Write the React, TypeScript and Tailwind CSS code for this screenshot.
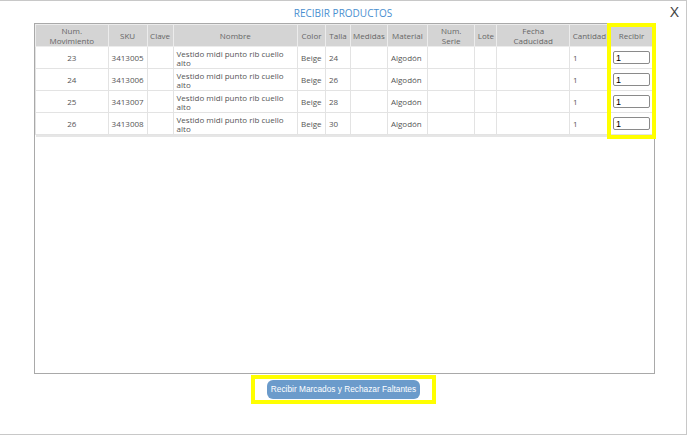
import { useState } from 'react'

type Item = { mov: number; sku: string; talla: string }

const items: Item[] = [
  { mov: 23, sku: '3413005', talla: '24' },
  { mov: 24, sku: '3413006', talla: '26' },
  { mov: 25, sku: '3413007', talla: '28' },
  { mov: 26, sku: '3413008', talla: '30' },
]

const headers: { label: React.ReactNode; w: string }[] = [
  { label: <>Num.<br />Movimiento</>, w: 'w-[73px]' },
  { label: 'SKU', w: 'w-[38px]' },
  { label: 'Clave', w: 'w-[26px]' },
  { label: 'Nombre', w: 'w-[126px]' },
  { label: 'Color', w: 'w-[28px]' },
  { label: 'Talla', w: 'w-[25px]' },
  { label: 'Medidas', w: 'w-[37px]' },
  { label: 'Material', w: 'w-[40px]' },
  { label: <>Num.<br />Serie</>, w: 'w-[48px]' },
  { label: 'Lote', w: 'w-[22px]' },
  { label: <>Fecha<br />Caducidad</>, w: 'w-[73px]' },
  { label: 'Cantidad', w: 'w-[40px]' },
  { label: 'Recibir', w: 'w-[42px]' },
]

const td = 'border border-[#e3e3e3] px-[3px] align-middle leading-[9px]'

export default function App() {
  const [qty, setQty] = useState<string[]>(items.map(() => '1'))

  return (
    <div className="w-[688px] h-[437px] bg-white overflow-hidden font-['Open_Sans',sans-serif] text-[#555]">
      <div className="relative h-[435px] w-[687px] border-t border-r border-b border-[#c8c8c8]">
        <button className="absolute right-[7px] top-[1px] text-[14px] font-['Liberation_Sans',sans-serif] text-[#444]">X</button>

        <h2 className="pt-[5px] h-[22px] text-center text-[10px] leading-[14px] text-[#4a8fd0]">RECIBIR PRODUCTOS</h2>

        <div className="ml-[34px] w-[621px] h-[351px] border border-[#a9a9a9] overflow-hidden">
          <table className="table-fixed border-collapse text-[8px]">
            <thead>
              <tr className="h-[22px] bg-[#d4d4d4]">
                {headers.map((h, i) => (
                  <th key={i} className={`${h.w} border border-[#ececec] font-normal text-center text-[#666] px-[2px] leading-[10px]`}>
                    {h.label}
                  </th>
                ))}
              </tr>
            </thead>
            <tbody>
              {items.map((it, i) => (
                <tr key={it.mov} className="h-[22px]">
                  <td className={`${td} text-center`}>{it.mov}</td>
                  <td className={td}>{it.sku}</td>
                  <td className={td}></td>
                  <td className={td}>Vestido midi punto rib cuello alto</td>
                  <td className={td}>Beige</td>
                  <td className={td}>{it.talla}</td>
                  <td className={td}></td>
                  <td className={td}>Algodón</td>
                  <td className={td}></td>
                  <td className={td}></td>
                  <td className={td}></td>
                  <td className={td}>1</td>
                  <td className={td}>
                    <input
                      value={qty[i]}
                      onChange={(e) => setQty(qty.map((q, j) => (j === i ? e.target.value : q)))}
                      className="w-[37px] h-[13px] border border-[#8a8a8a] rounded-[2px] px-[2px] text-[9px] font-medium text-black font-['Liberation_Sans',sans-serif] outline-none"
                    />
                  </td>
                </tr>
              ))}
              <tr className="h-[2px] bg-[#e6e6e6]">
                <td colSpan={13}></td>
              </tr>
            </tbody>
          </table>
        </div>

        {/* highlight on the Recibir column */}
        <div className="absolute left-[607px] top-[22px] w-[49px] h-[116px] border-[4px] border-[#ffff00] pointer-events-none" />

        <div className="flex justify-center mt-[1px]">
          <div className="ml-[1px] flex items-center border-[4px] border-[#ffff00] px-[12px] py-[1px]">
            <button className="h-[19px] px-[4px] rounded-[6px] bg-[#6b9bcb] text-white text-[8.3px] leading-none font-['Liberation_Sans',sans-serif]">
              Recibir Marcados y Rechazar Faltantes
            </button>
          </div>
        </div>
      </div>
    </div>
  )
}
